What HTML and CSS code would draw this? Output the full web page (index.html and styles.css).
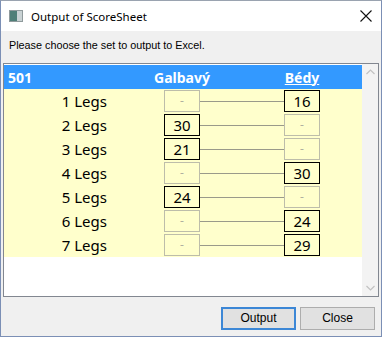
FILE: index.html
```html
<!DOCTYPE html>
<html lang="en">
<head>
  <meta charset="UTF-8">
  <title>Output of ScoreSheet</title>
  <link rel="stylesheet" href="styles.css">
</head>
<body>

  <div class="window">
    <div class="titlebar">
      <svg class="app-icon" width="14" height="12" viewBox="0 0 14 12">
        <rect x="0" y="0" width="14" height="12" fill="#8f9a9c"/>
        <rect x="1" y="1" width="7" height="10" fill="#4f7f78"/>
        <rect x="8" y="1" width="5" height="10" fill="#c9d2d4"/>
      </svg>
      <span class="title">Output of ScoreSheet</span>
      <svg class="close-x" width="12" height="12" viewBox="0 0 12 12">
        <path d="M0.5 0.5 L11.5 11.5 M11.5 0.5 L0.5 11.5" stroke="#111" stroke-width="1.1"/>
      </svg>
    </div>

    <div class="body">
      <p class="prompt">Please choose the set to output to Excel.</p>

      <div class="listbox">
        <div class="list">
          <div class="head">
            <span class="h-set">501</span>
            <span></span>
            <span class="h-player"><span>Galbavý</span></span>
            <span></span>
            <span class="h-player"><span class="current">Bédy</span></span>
          </div>

          <div class="row">
            <span class="label">1 Legs</span><span></span>
            <span class="cell empty">-</span><span class="link"></span><span class="cell">16</span>
          </div>
          <div class="row">
            <span class="label">2 Legs</span><span></span>
            <span class="cell">30</span><span class="link"></span><span class="cell empty">-</span>
          </div>
          <div class="row">
            <span class="label">3 Legs</span><span></span>
            <span class="cell">21</span><span class="link"></span><span class="cell empty">-</span>
          </div>
          <div class="row">
            <span class="label">4 Legs</span><span></span>
            <span class="cell empty">-</span><span class="link"></span><span class="cell">30</span>
          </div>
          <div class="row">
            <span class="label">5 Legs</span><span></span>
            <span class="cell">24</span><span class="link"></span><span class="cell empty">-</span>
          </div>
          <div class="row">
            <span class="label">6 Legs</span><span></span>
            <span class="cell empty">-</span><span class="link"></span><span class="cell">24</span>
          </div>
          <div class="row">
            <span class="label">7 Legs</span><span></span>
            <span class="cell empty">-</span><span class="link"></span><span class="cell">29</span>
          </div>
        </div>

        <div class="scrollbar">
          <svg width="9" height="6" viewBox="0 0 9 6"><path d="M0.5 5 L4.5 1 L8.5 5" fill="none" stroke="#c2c2c2" stroke-width="1.2"/></svg>
          <svg width="9" height="6" viewBox="0 0 9 6"><path d="M0.5 1 L4.5 5 L8.5 1" fill="none" stroke="#c2c2c2" stroke-width="1.2"/></svg>
        </div>
      </div>

      <div class="buttons">
        <button class="default">Output</button>
        <button>Close</button>
      </div>
    </div>
  </div>

</body>
</html>
```

FILE: styles.css
```css
body {
  margin: 0;
  font-family: 'Liberation Sans', Arial, sans-serif;
  background-color: #ffffff;
}

.window {
  width: 382px;
  height: 337px;
  box-sizing: border-box;
  border: 1px solid #7b8fb5;
  border-top-color: #9aa3b0;
  display: flex;
  flex-direction: column;
}

.titlebar {
  height: 30px;
  background-color: #ffffff;
  display: flex;
  align-items: center;
  padding: 0 9px 0 8px;
}

.app-icon {
  margin-right: 8px;
}

.title {
  flex: 1;
  font-family: 'Noto Sans', sans-serif;
  font-size: 11.5px;
  color: #000;
}

.body {
  flex: 1;
  background-color: #f0f0f0;
  display: flex;
  flex-direction: column;
  padding: 0 1px;
}

.prompt {
  margin: 0;
  padding: 8px 0 0 7px;
  height: 24px;
  font-size: 10.8px;
  color: #000;
}

.listbox {
  height: 234px;
  box-sizing: border-box;
  border: 1px solid #828790;
  background-color: #ffffff;
  display: flex;
  margin: 0 1px;
}

.list {
  flex: 1;
}

.head,
.row {
  display: grid;
  grid-template-columns: 103px 57px 36px 84px 36px;
  align-items: center;
}

.head {
  height: 24px;
  background-color: #3399ff;
  color: #ffffff;
  font-family: 'Noto Sans', sans-serif;
  font-weight: bold;
  font-size: 14px;
  margin-top: 1px;
}

.h-set {
  padding-left: 4px;
}

.h-player {
  display: flex;
  justify-content: center;
  min-width: 0;
}

.current {
  text-decoration: underline;
}

.row {
  height: 24px;
  background-color: #ffffcc;
  font-family: 'Noto Sans', sans-serif;
}

.label {
  text-align: right;
  font-size: 15px;
  color: #000;
}

.cell {
  height: 22px;
  box-sizing: border-box;
  border: 1px solid #000;
  text-align: center;
  font-size: 15px;
  line-height: 20px;
  color: #000;
}

.cell.empty {
  border-color: #bdbdaa;
  color: #b0b0a0;
  font-size: 12px;
}

.link {
  height: 1px;
  background-color: #9a9a8a;
}

.scrollbar {
  width: 16px;
  background-color: #f3f3f3;
  display: flex;
  flex-direction: column;
  align-items: center;
  justify-content: space-between;
  padding: 5px 0;
}

.buttons {
  flex: 1;
  display: flex;
  justify-content: flex-end;
  align-items: center;
  gap: 4px;
  padding: 3px 5px 0 0;
}

button {
  width: 75px;
  height: 23px;
  font-family: 'Liberation Sans', Arial, sans-serif;
  font-size: 12px;
  color: #000;
  background-color: #e1e1e1;
  border: 1px solid #adadad;
  padding: 0;
}

button.default {
  border: 2px solid #3c87d6;
}
```
